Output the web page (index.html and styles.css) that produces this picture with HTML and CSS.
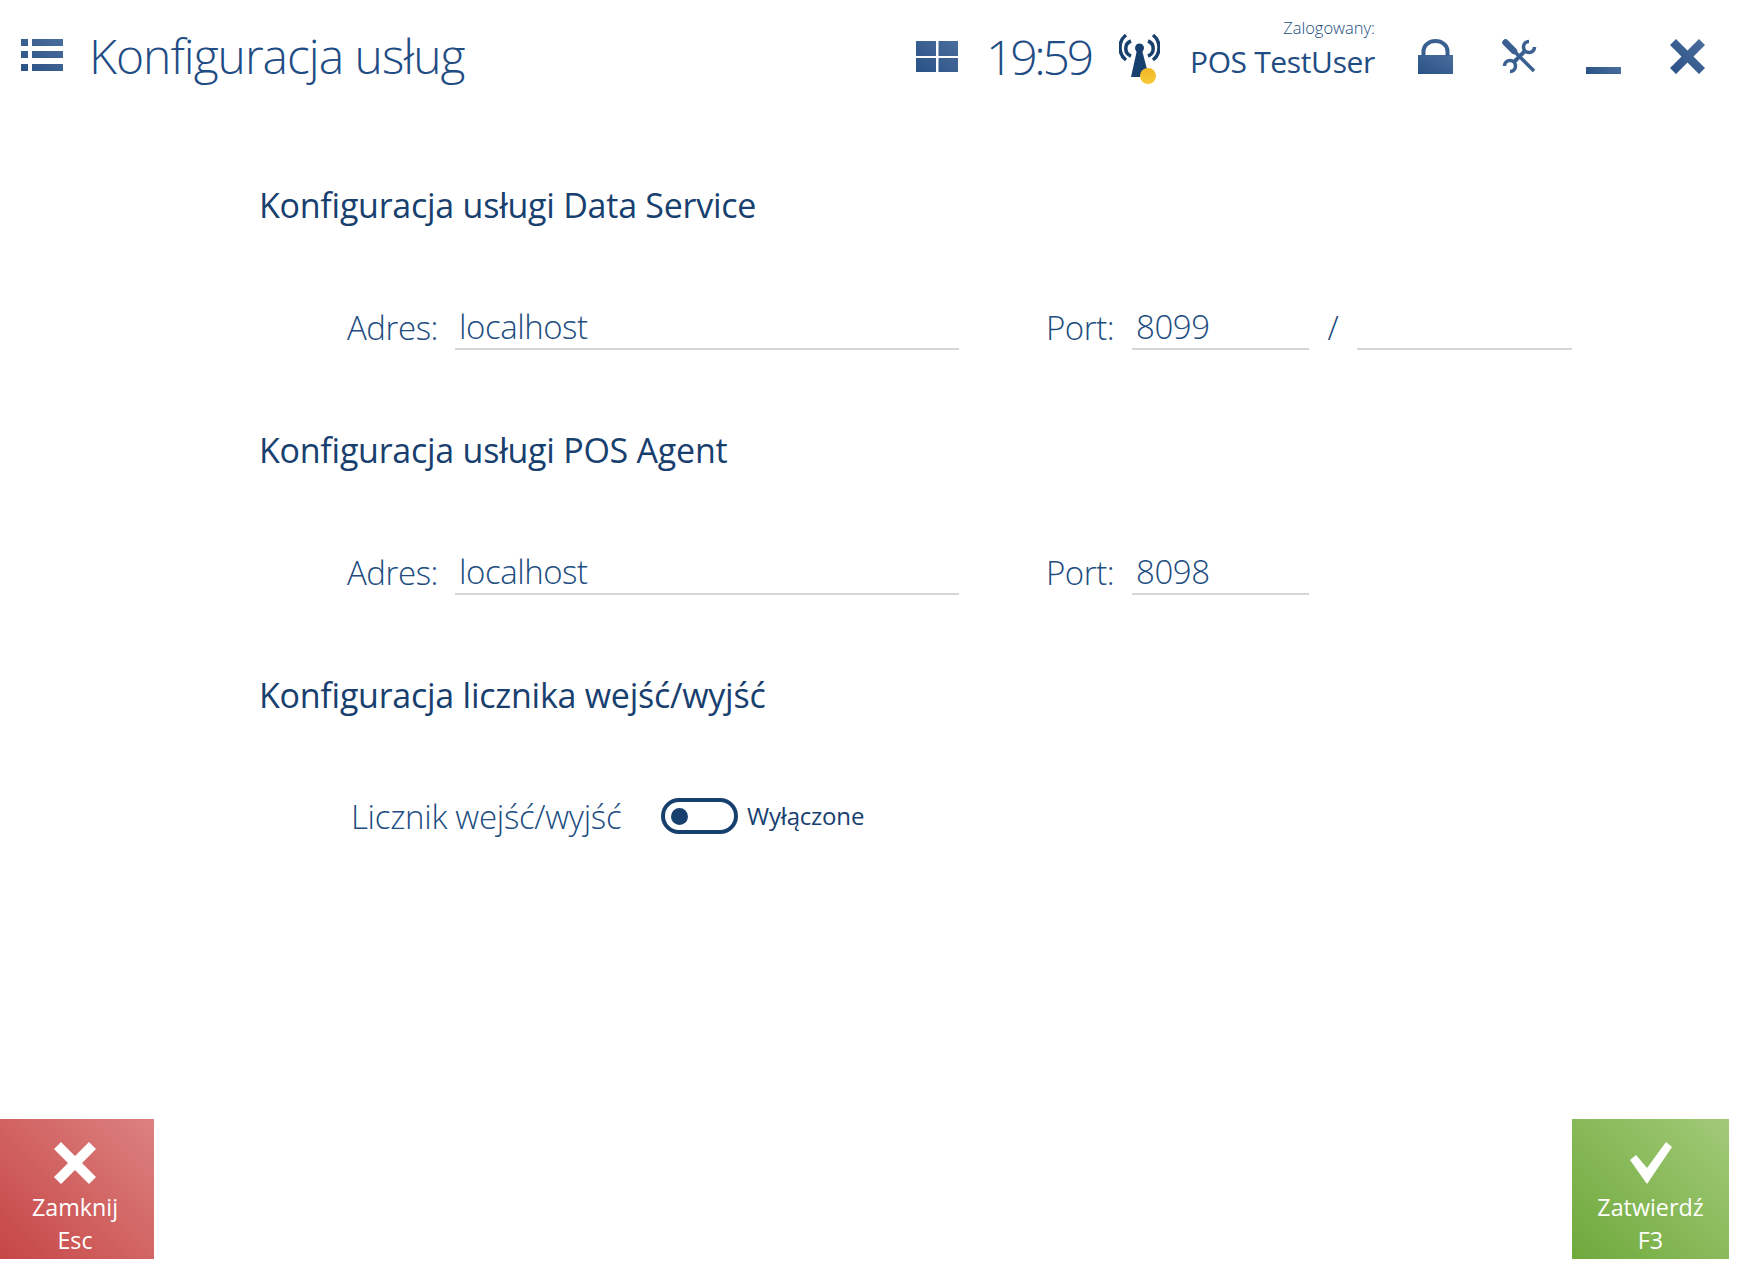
FILE: index.html
```html
<!DOCTYPE html>
<html lang="pl">
<head>
<meta charset="utf-8">
<title>Konfiguracja usług</title>
<link rel="stylesheet" href="styles.css">
</head>
<body>
<svg class="defs" width="0" height="0" aria-hidden="true">
  <defs>
    <linearGradient id="ig" x1="0" y1="1" x2="1" y2="0"><stop offset="0" stop-color="#2a5187"/><stop offset="1" stop-color="#4a6e9c"/></linearGradient>
    <linearGradient id="sun" x1="0" y1="0" x2="0" y2="1"><stop offset="0" stop-color="#f2b824"/><stop offset="1" stop-color="#f7c93a"/></linearGradient>
  </defs>
</svg>
<div class="app">
  <header class="topbar">
    <svg class="menu-icon" viewBox="0 0 42 32" fill="url(#ig)"><path d="M0 0h7v7H0zM11 0h31v7H11zM0 12h7v7H0zM11 12h31v7H11zM0 25h7v7H0zM11 25h31v7H11z"/></svg>
    <h1 class="title">Konfiguracja usług</h1>
    <div class="tools">
      <svg class="ic-win" viewBox="0 0 42 31" fill="url(#ig)"><path d="M0 0h20v15H0zM22.500 0H42v15H22.500zM0 17h20v14H0zM22.500 17H42v14H22.500z"/></svg>
      <span class="clock">19:59</span>
      <svg class="ic-ant" viewBox="0 0 41 51"><g fill="none" stroke="#17406f" stroke-width="3.500"><path d="M7 2A16 16 0 0 0 7 27M34 2A16 16 0 0 1 34 27"/><path d="M12 8A8 8 0 0 0 12 23M29 8A8 8 0 0 1 29 23"/></g><circle cx="20.500" cy="15" r="4.500" fill="#17406f"/><path d="M18 17h5l7 27H12z" fill="#17406f"/><circle cx="29" cy="43" r="8" fill="url(#sun)"/></svg>
      <div class="user"><span class="user-label">Zalogowany:</span><span class="user-name">POS TestUser</span></div>
      <svg class="ic-lock" viewBox="0 0 35 35" fill="url(#ig)"><path d="M0 16h35v19H0z"/><path d="M5.500 17V12a12 10 0 0 1 24 0v5" fill="none" stroke="#3a6092" stroke-width="4"/></svg>
      <svg class="ic-tools" viewBox="0 0 35 35"><g fill="none" stroke="#3a6092"><path d="M3.500 3.500 12 12" stroke-width="6.500" stroke-linecap="round"/><path d="M12 12 32 32" stroke-width="3.500"/><path d="M11 24 24 11" stroke-width="4"/><path d="M32.500 8A5.500 5.500 0 1 1 27 2.500" stroke-width="3.600"/><path d="M2.500 27A5.500 5.500 0 1 1 8 32.500" stroke-width="3.600"/></g></svg>
      <span class="ic-min"></span>
      <svg class="ic-close" viewBox="0 0 35 35" fill="url(#ig)"><path d="M0 6 6 0l11.500 11.500L29 0l6 6-11.500 11.500L35 29l-6 6-11.500-11.500L6 35l-6-6 11.500-11.500z"/></svg>
    </div>
  </header>
  <main class="content">
    <section class="section">
      <h2 class="heading">Konfiguracja usługi Data Service</h2>
      <div class="row">
        <label class="label label-addr">Adres:</label><span class="field field-addr">localhost</span>
        <label class="label label-port">Port:</label><span class="field field-port">8099</span>
        <span class="slash">/</span><span class="field field-extra"></span>
      </div>
    </section>
    <section class="section">
      <h2 class="heading">Konfiguracja usługi POS Agent</h2>
      <div class="row">
        <label class="label label-addr">Adres:</label><span class="field field-addr">localhost</span>
        <label class="label label-port">Port:</label><span class="field field-port">8098</span>
      </div>
    </section>
    <section class="section">
      <h2 class="heading">Konfiguracja licznika wejść/wyjść</h2>
      <div class="row row-toggle">
        <label class="label label-count">Licznik wejść/wyjść</label>
        <span class="toggle"><span class="knob"></span></span>
        <span class="toggle-text">Wyłączone</span>
      </div>
    </section>
  </main>
  <footer class="footer">
    <button class="action action-close">
      <svg class="action-icon" viewBox="0 0 42 42"><path d="M0 7 7 0l14 14L35 0l7 7-14 14 14 14-7 7-14-14L7 42l-7-7 14-14z"/></svg>
      <span>Zamknij</span><span>Esc</span>
    </button>
    <button class="action action-ok">
      <svg class="action-icon" viewBox="0 0 42 42"><path d="M0 18l6-5 11 13L36 0l6 5-25 37z"/></svg>
      <span>Zatwierdź</span><span>F3</span>
    </button>
  </footer>
</div>
</body>
</html>
```

FILE: styles.css
```css
* { box-sizing: border-box; }
html, body { margin: 0; height: 100%; background: #fff; }
body { font-family: "Open Sans", "Noto Sans", sans-serif; color: #17406f; }
.defs { display: block; height: 0; }
.app { width: 1729px; height: 1259px; display: flex; flex-direction: column; }
.topbar { height: 113px; display: flex; align-items: center; padding: 0 24px 0 21px; flex: none; }
.menu-icon { width: 42px; height: 32px; margin-top: -3px; flex: none; }
.title { margin: -2px 0 0 26px; font-size: 48px; font-weight: 300; letter-spacing: -1px; color: #1f4c84; line-height: 1; white-space: nowrap; }
.tools { margin-left: auto; display: flex; align-items: center; }
.ic-win { width: 42px; height: 31px; flex: none; }
.clock { width: 161px; text-align: center; font-size: 48px; font-weight: 300; letter-spacing: -3.2px; color: #1f4c84; line-height: 1; }
.ic-ant { width: 41px; height: 51px; flex: none; margin-top: 4px; }
.user { width: 215px; display: flex; flex-direction: column; align-items: flex-end; margin-top: -14px; white-space: nowrap; }
.user-label { font-size: 16.5px; font-weight: 300; color: #204c80; line-height: 22px; }
.user-name { font-size: 30px; letter-spacing: -0.35px; color: #1f4c84; line-height: 40px; margin-top: 3px; }
.ic-lock { width: 35px; height: 35px; margin-left: 43px; flex: none; }
.ic-tools { width: 35px; height: 35px; margin-left: 49px; flex: none; }
.ic-min { width: 35px; height: 7px; background: linear-gradient(45deg, #2a5187, #4a6e9c); margin-left: 49px; margin-top: 28px; flex: none; }
.ic-close { width: 35px; height: 35px; margin-left: 49px; flex: none; }
.content { flex: 1; padding: 69px 0 0 259px; }
.section { height: 245px; }
.heading { margin: 0; font-size: 34px; font-weight: 400; letter-spacing: -0.25px; color: #17406f; line-height: 46px; }
.row { margin-top: 74px; padding-left: 88px; display: flex; align-items: flex-end; height: 48px; }
.label { font-size: 33px; font-weight: 300; letter-spacing: -0.45px; color: #204c80; line-height: 44px; }
.field { display: block; height: 47px; border-bottom: 2px solid #d6d6d6; font-size: 33px; font-weight: 300; letter-spacing: -0.45px; color: #204c80; line-height: 48px; padding-left: 4px; }
.label-addr { width: 108px; }
.field-addr { width: 504px; }
.label-port { width: 86px; margin-left: 87px; }
.field-port { width: 177px; }
.slash { width: 48px; text-align: center; font-size: 33px; font-weight: 300; color: #204c80; line-height: 44px; }
.field-extra { width: 215px; }
.row-toggle { padding-left: 92px; align-items: center; }
.label-count { width: 310px; letter-spacing: -0.3px; padding-top: 2px; }
.toggle { width: 77px; height: 36px; border: 4px solid #17406f; border-radius: 18px; display: flex; align-items: center; padding-left: 6px; }
.knob { width: 17px; height: 17px; border-radius: 50%; background: #17406f; }
.toggle-text { margin-left: 9px; font-size: 24px; letter-spacing: -0.2px; color: #17406f; margin-bottom: 2px; }
.footer { height: 140px; display: flex; justify-content: space-between; flex: none; }
.action { border: 0; padding: 23px 0 0; display: flex; flex-direction: column; align-items: center; color: #fff; font-family: inherit; font-size: 23.3px; line-height: 33px; }
.action-icon { width: 42px; height: 42px; fill: #fff; margin-bottom: 7px; }
.action-close { width: 154px; padding-right: 4px; background: linear-gradient(45deg, #c64646, #dc8280); }
.action-ok { width: 157px; background: linear-gradient(45deg, #6fa93b, #a2ca78); }
```
